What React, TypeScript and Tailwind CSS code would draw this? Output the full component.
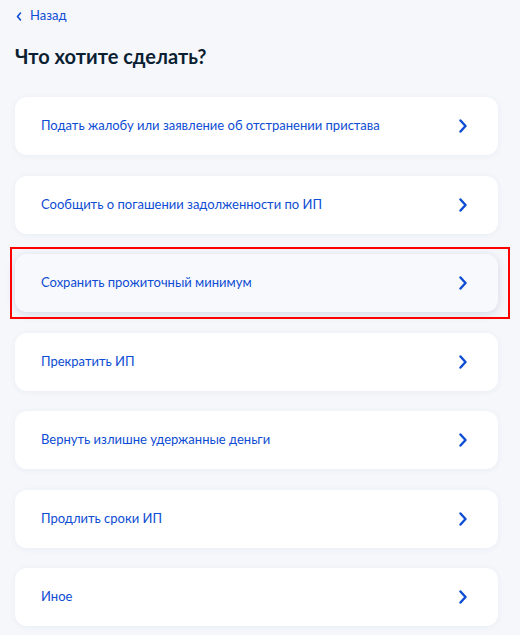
import React from "react";

const items = [
  "Подать жалобу или заявление об отстранении пристава",
  "Сообщить о погашении задолженности по ИП",
  "Сохранить прожиточный минимум",
  "Прекратить ИП",
  "Вернуть излишне удержанные деньги",
  "Продлить сроки ИП",
  "Иное",
];

function Chevron() {
  return (
    <svg width="10" height="14" viewBox="0 0 10 14" fill="none">
      <path d="M2.5 1.5 L7.5 7 L2.5 12.5" stroke="#0d4cd3" strokeWidth="2.4" strokeLinecap="round" strokeLinejoin="round" />
    </svg>
  );
}

export default function App() {
  return (
    <div className="w-[520px] h-[635px] overflow-hidden bg-[#f5f7fb] px-[15px] pt-[7px]" style={{ fontFamily: "Lato, 'Noto Sans', sans-serif" }}>
      <div className="flex items-center gap-[8px] text-[13px] text-[#0d4cd3] h-[18px]">
        <svg width="6" height="9" viewBox="0 0 6 9" fill="none" className="ml-[1px]">
          <path d="M4.5 1 L1.5 4.5 L4.5 8" stroke="#0d4cd3" strokeWidth="1.6" strokeLinecap="round" strokeLinejoin="round" />
        </svg>
        <span>Назад</span>
      </div>
      <h1 className="mt-[17px] text-[20px] font-bold text-[#0b1f33] leading-[28px]">Что хотите сделать?</h1>
      <div className="mt-[27px] flex flex-col gap-[20.5px] w-[483px]">
        {items.map((t, i) => {
          const active = i === 2;
          return (
            <div key={t} className="relative">
              <div
                className={
                  active
                    ? "h-[58px] rounded-[12px] bg-[#f8f9fd] shadow-[0_2px_10px_rgba(40,60,110,0.16)] flex items-center justify-between pl-[26px] pr-[30px]"
                    : "h-[58px] rounded-[12px] bg-white shadow-[0_1px_6px_rgba(40,60,110,0.06)] flex items-center justify-between pl-[26px] pr-[30px]"
                }
              >
                <span className="text-[13px] text-[#0d4cd3]">{t}</span>
                <Chevron />
              </div>
              {active && (
                <div className="absolute left-[-5px] right-[-12px] top-[-7px] bottom-[-7px] border-2 border-[#ff0000] pointer-events-none" />
              )}
            </div>
          );
        })}
      </div>
    </div>
  );
}
